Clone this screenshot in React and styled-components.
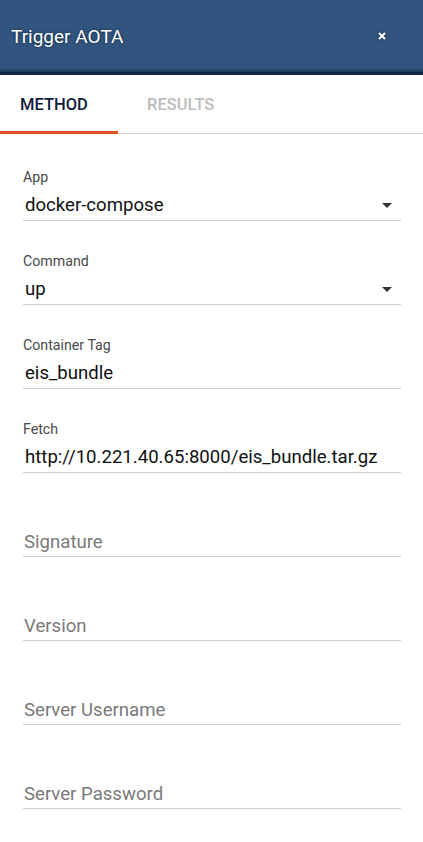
import React from "react";
import styled, { createGlobalStyle } from "styled-components";

const FIELDS = [
  { label: "App", value: "docker-compose", select: true },
  { label: "Command", value: "up", select: true },
  { label: "Container Tag", value: "eis_bundle" },
  { label: "Fetch", value: "http://10.221.40.65:8000/eis_bundle.tar.gz" },
  { placeholder: "Signature" },
  { placeholder: "Version" },
  { placeholder: "Server Username" },
  { placeholder: "Server Password" },
];

const App = () => {
  return (
    <Container>
      <GlobalStyle />
      <Header>
        <Title>Trigger AOTA</Title>
        <CloseButton aria-label="close">
          <svg width="8" height="8" viewBox="0 0 8 8">
            <path d="M1 1L7 7M7 1L1 7" stroke="#fff" strokeWidth="2" />
          </svg>
        </CloseButton>
      </Header>

      <Tabs>
        <Tab active>METHOD</Tab>
        <Tab>RESULTS</Tab>
      </Tabs>

      <Form>
        {FIELDS.map((f, i) => (
          <Field key={i}>
            {f.label && <Label>{f.label}</Label>}
            <Input empty={!f.value}>
              <span>{f.value || f.placeholder}</span>
              {f.select && (
                <svg width="10" height="5" viewBox="0 0 10 5">
                  <path d="M0 0H10L5 5Z" fill="#333" />
                </svg>
              )}
            </Input>
          </Field>
        ))}
      </Form>
    </Container>
  );
};

export default App;

const GlobalStyle = createGlobalStyle`
  body {
    margin: 0;
    background: #fff;
    font-family: Roboto, "Liberation Sans", sans-serif;
  }
`;

const Container = styled.div`
  width: 423px;
  height: 842px;
  overflow: hidden;
  background: #fff;
`;

const Header = styled.div`
  height: 75px;
  background: #31557f;
  border-bottom: 3px solid #0f2747;
  box-shadow: inset 0 -4px 3px -2px rgba(10, 30, 60, 0.5);
  display: flex;
  align-items: center;
  justify-content: space-between;
  padding: 0 37px 0 11px;
  box-sizing: border-box;
`;

const Title = styled.h1`
  margin: 0;
  font-size: 19px;
  font-weight: 400;
  color: #fff;
  text-shadow: 0 0 3px rgba(0, 0, 0, 0.6);
  padding-top: 1px;
`;

const CloseButton = styled.button`
  border: none;
  background: none;
  padding: 0;
  display: flex;
  filter: drop-shadow(0 0 2px rgba(0, 0, 0, 0.5));
`;

const Tabs = styled.div`
  display: flex;
  height: 58px;
  border-bottom: 1px solid #d4d4d4;
`;

const Tab = styled.div`
  width: 118px;
  display: flex;
  align-items: center;
  justify-content: flex-start;
  padding-left: ${(p) => (p.active ? "20px" : "29px")};
  box-sizing: border-box;
  font-size: 16.5px;
  font-weight: 500;
  color: ${(p) => (p.active ? "#0e1b3d" : "#bdbdbd")};
  border-bottom: 3px solid ${(p) => (p.active ? "#e0501f" : "transparent")};
  margin-bottom: -1px;
  padding-top: 3px;
`;

const Form = styled.div`
  padding: 3px 22px 0 23px;
`;

const Field = styled.div`
  height: 84px;
  display: flex;
  flex-direction: column;
  justify-content: flex-end;
`;

const Label = styled.div`
  font-size: 14.2px;
  line-height: 17px;
  color: #4a4a4a;
  margin-bottom: 7px;
`;

const Input = styled.div`
  display: flex;
  align-items: center;
  justify-content: space-between;
  height: 25px;
  padding: 0 9px ${(p) => (p.empty ? "1px" : "2px")} ${(p) => (p.empty ? "1px" : "2px")};
  border-bottom: 1px solid #d0d0d0;
  font-size: 18.6px;
  line-height: 25px;
  color: ${(p) => (p.empty ? "#7a7a7a" : "#111")};
`;
